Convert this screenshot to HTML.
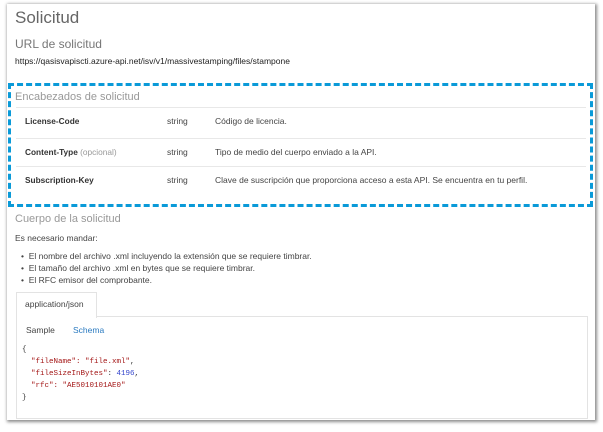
<!DOCTYPE html>
<html><head><meta charset="utf-8"><style>
body{margin:0;width:603px;height:432px;background:#fff;font-family:"Liberation Sans",sans-serif;position:relative;overflow:hidden}
.frame{position:absolute;left:7px;top:4px;width:588px;height:416px;background:#fff;box-shadow:1px 1px 3px 1px rgba(0,0,0,.45)}
.t{position:absolute;white-space:nowrap;color:#444}
.dash{position:absolute;left:8px;top:83px;width:579px;height:118px;border:3px dashed #0a9ad8;box-sizing:content-box}
.hr{position:absolute;height:1px;background:#e8e8e8;left:16px;width:570px}
.code{font-family:"Liberation Mono",monospace;font-size:7.5px;color:#a31515}
.n{font-weight:bold;color:#333;font-size:8.3px}
</style></head><body>
<div class="frame"></div>
<div class="t" style="left:15px;top:8px;font-size:17px;color:#666">Solicitud</div>
<div class="t" style="left:15px;top:37px;font-size:12px;color:#777">URL de solicitud</div>
<div class="t" style="left:15px;top:56px;font-size:8.5px;color:#222">https://qasisvapiscti.azure-api.net/isv/v1/massivestamping/files/stampone</div>
<div class="dash"></div>
<div class="t" style="left:15px;top:91px;font-size:11px;color:#999">Encabezados de solicitud</div>
<div class="hr" style="top:107px"></div>
<div class="hr" style="top:138px"></div>
<div class="hr" style="top:166px"></div>
<div class="t n" style="left:25px;top:116px">License-Code</div>
<div class="t" style="left:167px;top:116px;font-size:8.5px">string</div>
<div class="t" style="left:215px;top:116px;font-size:8.5px">Código de licencia.</div>
<div class="t n" style="left:25px;top:147px">Content-Type <span style="color:#999;font-weight:normal">(opcional)</span></div>
<div class="t" style="left:167px;top:147px;font-size:8.5px">string</div>
<div class="t" style="left:215px;top:147px;font-size:8.5px">Tipo de medio del cuerpo enviado a la API.</div>
<div class="t n" style="left:25px;top:175px">Subscription-Key</div>
<div class="t" style="left:167px;top:175px;font-size:8.5px">string</div>
<div class="t" style="left:215px;top:175px;font-size:8.5px">Clave de suscripción que proporciona acceso a esta API. Se encuentra en tu perfil.</div>
<div class="t" style="left:15px;top:213px;font-size:11px;color:#999">Cuerpo de la solicitud</div>
<div class="t" style="left:15px;top:233px;font-size:8.5px">Es necesario mandar:</div>
<div class="t" style="left:21px;top:251px;font-size:8.5px">•&nbsp; El nombre del archivo .xml incluyendo la extensión que se requiere timbrar.</div>
<div class="t" style="left:21px;top:263px;font-size:8.5px">•&nbsp; El tamaño del archivo .xml en bytes que se requiere timbrar.</div>
<div class="t" style="left:21px;top:275px;font-size:8.5px">•&nbsp; El RFC emisor del comprobante.</div>
<div style="position:absolute;left:16px;top:316px;width:570px;height:101px;border:1px solid #e3e3e3"></div>
<div style="position:absolute;left:16px;top:292px;width:79px;height:25px;border:1px solid #e3e3e3;border-bottom:none;background:#fff"></div>
<div class="t" style="left:25px;top:299px;font-size:8.5px">application/json</div>
<div class="t" style="left:26px;top:325px;font-size:8.5px">Sample</div>
<div class="t" style="left:73px;top:325px;font-size:8.5px;color:#2a7ac0">Schema</div>
<div class="t code" style="left:22px;top:346px;color:#333">{</div>
<div class="t code" style="left:22px;top:358px">&nbsp;&nbsp;"fileName": "file.xml"<span style="color:#333">,</span></div>
<div class="t code" style="left:22px;top:370px">&nbsp;&nbsp;"fileSizeInBytes"<span style="color:#333">: </span><span style="color:#3344cc">4196</span><span style="color:#333">,</span></div>
<div class="t code" style="left:22px;top:382px">&nbsp;&nbsp;"rfc": "AE5010101AE0"</div>
<div class="t code" style="left:22px;top:394px;color:#333">}</div>
</body></html>
